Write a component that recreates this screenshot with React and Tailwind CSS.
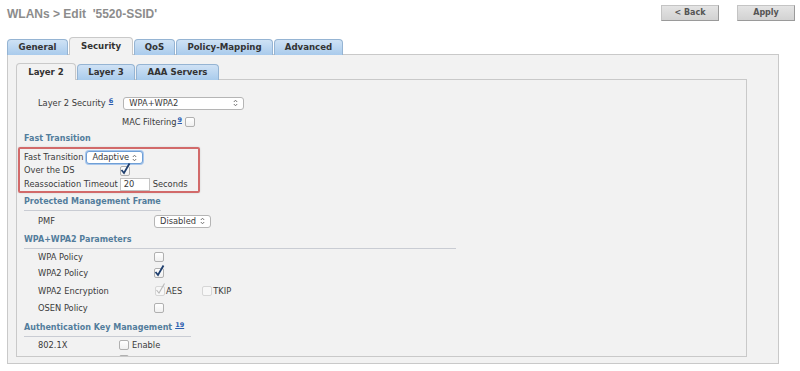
import React from "react";

function Arrows() {
  return (
    <svg width="5" height="8" viewBox="0 0 5 8" className="shrink-0">
      <path d="M0.8 3 L2.5 1.2 L4.2 3" fill="none" stroke="#666" strokeWidth="0.9" />
      <path d="M0.8 5 L2.5 6.8 L4.2 5" fill="none" stroke="#666" strokeWidth="0.9" />
    </svg>
  );
}

function Select({ value, width, focus }) {
  return (
    <div
      className={`flex items-center justify-between h-[13px] rounded-[3px] bg-white pl-[5px] pr-[5px] ${
        focus ? "border border-[#6f9fd6] shadow-[0_0_0_1px_#a9c7ec]" : "border border-[#b5b5b5]"
      }`}
      style={{ width }}
    >
      <span className="leading-none">{value}</span>
      <Arrows />
    </div>
  );
}

function Box({ checked, disabled }) {
  return (
    <div className="relative w-[10px] h-[10px] shrink-0">
      <div
        className={`w-[10px] h-[10px] rounded-[2px] border ${
          disabled ? "border-[#d6d6d6] bg-[#f7f7f7]" : "border-[#b0b0b0] bg-gradient-to-b from-white to-[#f0f0f0]"
        }`}
      />
      {checked && (
        <svg width="11" height="13" viewBox="0 0 11 13" className="absolute left-[0px] top-[-4px]">
          <path
            d="M1.5 8 L4 11 L9.5 1.5"
            fill="none"
            stroke={disabled ? "#b9b9b9" : "#1f3f6e"}
            strokeWidth={disabled ? "1.1" : "1.8"}
          />
        </svg>
      )}
    </div>
  );
}

function Sup({ n, ml = 3, mt = 2 }) {
  return (
    <span
      className="self-start text-[6.5px] font-bold text-[#2a5db0] underline leading-none"
      style={{ marginLeft: ml, marginTop: mt }}
    >
      {n}
    </span>
  );
}

function Heading({ text, line, sup }) {
  return (
    <div
      className={`ml-[7px] flex items-center whitespace-nowrap font-bold text-[8px] text-[#527d9c] ${
        line ? "border-b border-[#c9ccd3] w-fit" : ""
      }`}
      style={line ? { minWidth: line.w, height: line.h } : { height: 14 }}
    >
      <span>{text}</span>
      {sup && <Sup n={sup} ml={3} mt={3} />}
    </div>
  );
}

function Row({ label, children, mt }) {
  return (
    <div className="flex items-center h-[14px] pl-[21px]" style={{ marginTop: mt }}>
      <span className="w-[116px] shrink-0">{label}</span>
      {children}
    </div>
  );
}

function Tab({ label, active, w, h }) {
  return (
    <div
      className={`flex items-center justify-center whitespace-nowrap font-bold text-[8.6px] text-[#333] rounded-t-[4px] border border-b-0 ${
        active
          ? "bg-[#f2f2f2] border-[#c9c9c9]"
          : "bg-gradient-to-b from-[#cfe2f5] to-[#a9cbec] border-[#95b4d3]"
      }`}
      style={{ width: w, height: h }}
    >
      {label}
    </div>
  );
}

export default function App() {
  return (
    <div className="w-[800px] h-[371px] bg-white overflow-hidden font-['DejaVu_Sans',sans-serif] text-[8.3px] text-[#3a3a3a]">
      <div className="flex justify-between items-start h-[37px]">
        <div className="pl-[7px] pt-[5px] font-['Liberation_Sans',sans-serif] font-bold text-[12px] text-[#8c8c8c] whitespace-pre">
          {"WLANs > Edit  '5520-SSID'"}
        </div>
        <div className="flex gap-[18px] pt-[5px] pr-[5px]">
          {["< Back", "Apply"].map((b) => (
            <div
              key={b}
              className="w-[58px] h-[16px] flex items-center justify-center font-bold text-[8px] text-[#555] bg-gradient-to-b from-[#e4e4e4] to-[#d2d2d2] border border-[#c4c4c4] border-r-[#9a9a9a] border-b-[#9a9a9a]"
            >
              {b}
            </div>
          ))}
        </div>
      </div>

      <div className="flex items-end pl-[7px] h-[18px] gap-[1px] relative z-10 -mb-[1px]">
        <Tab label="General" w={61} h={16} />
        <Tab label="Security" active w={64} h={18} />
        <Tab label="QoS" w={41} h={16} />
        <Tab label="Policy-Mapping" w={97} h={16} />
        <Tab label="Advanced" w={69} h={16} />
      </div>

      <div className="ml-[7px] w-[772px] h-[310px] border border-[#c9c9c9] bg-[#f2f2f2] pt-[8px] pl-[8px]">
        <div className="flex items-end h-[17px] gap-[1px] relative z-10 -mb-[1px]">
          <Tab label="Layer 2" active w={60} h={17} />
          <Tab label="Layer 3" w={58} h={16} />
          <Tab label="AAA Servers" w={83} h={16} />
        </div>

        <div className="w-[731px] h-[278px] border border-[#c9c9c9] bg-[#f2f2f2] overflow-hidden">
          <div className="flex items-center h-[14px] pl-[21px] mt-[16px]">
            <span>Layer 2 Security</span>
            <Sup n="6" ml={3} />
            <div className="ml-[10px]">
              <Select value="WPA+WPA2" width={121} />
            </div>
          </div>

          <div className="flex items-center h-[14px] pl-[105px] mt-[5px]">
            <span>MAC Filtering</span>
            <Sup n="9" ml={1} />
            <div className="ml-[3px]"><Box /></div>
          </div>

          <div className="mt-[3px]">
            <Heading text="Fast Transition" />
          </div>

          <div className="ml-[1px] mt-[1px] w-[182px] h-[46px] border-2 border-[#d26a6a] rounded-[2px] pl-[4px] pt-[2px] shadow-[0_0_2px_rgba(0,0,0,0.15)]">
            <div className="flex items-center h-[13px]">
              <span>Fast Transition</span>
              <div className="ml-[3px]">
                <Select value="Adaptive" width={57} focus />
              </div>
            </div>
            <div className="flex items-center h-[13px]">
              <span className="w-[96px]">Over the DS</span>
              <Box checked />
            </div>
            <div className="flex items-center h-[14px]">
              <span>Reassociation Timeout</span>
              <div className="ml-[2px] w-[30px] h-[13px] bg-white border border-[#c4c4c4] flex items-center pl-[3px]">
                20
              </div>
              <span className="ml-[3px]">Seconds</span>
            </div>
          </div>

          <div className="mt-[1px]">
            <Heading text="Protected Management Frame" line={{ w: 133, h: 17 }} />
          </div>

          <Row label="PMF" mt={3}>
            <Select value="Disabled" width={57} />
          </Row>

          <div className="mt-[4px]">
            <Heading text="WPA+WPA2 Parameters" line={{ w: 432, h: 17 }} />
          </div>

          <Row label="WPA Policy" mt={1}>
            <Box />
          </Row>
          <Row label="WPA2 Policy" mt={2}>
            <Box checked />
          </Row>
          <Row label="WPA2 Encryption" mt={4}>
            <div className="flex items-center ml-[1px]">
              <Box checked disabled />
              <span className="ml-[1px]">AES</span>
              <div className="ml-[20px]"><Box disabled /></div>
              <span className="ml-[1px]">TKIP</span>
            </div>
          </Row>
          <Row label="OSEN Policy" mt={3}>
            <Box />
          </Row>

          <div className="mt-[4px]">
            <Heading text="Authentication Key Management" line={{ w: 167, h: 18 }} sup="19" />
          </div>

          <div className="flex items-center h-[14px] pl-[21px] mt-[1px]">
            <span className="w-[81px]">802.1X</span>
            <Box />
            <span className="ml-[3px]">Enable</span>
          </div>
          <div className="flex items-center h-[14px] pl-[102px] mt-[1px]">
            <Box />
          </div>
        </div>
      </div>
    </div>
  );
}
